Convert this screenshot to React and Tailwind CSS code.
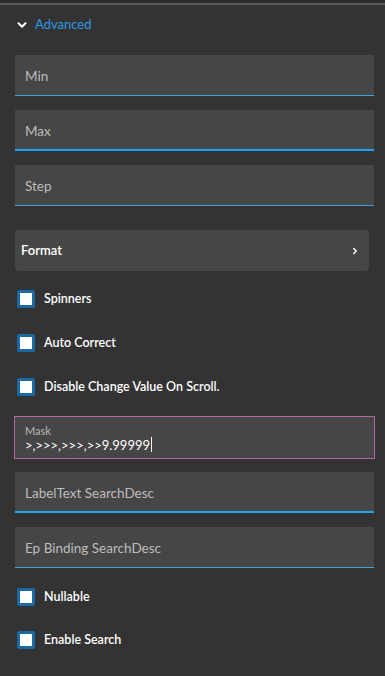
import { ChevronDown, ChevronRight } from 'lucide-react';

const font = { fontFamily: '"Source Sans Pro", Lato, "Noto Sans", sans-serif' };

function Field({ label, focused = false, className = '' }) {
  return (
    <div className={`h-[41px] bg-[#464646] flex flex-col ${className}`}>
      <div className="flex-1 flex items-center pl-[10px] pt-[3px]">
        <span className="text-[13.5px] text-[#bdbdbd]">{label}</span>
      </div>
      <div className={focused ? 'h-[2px] bg-[#1fa3f2]' : 'h-[1px] bg-[#3fa2de]'} />
    </div>
  );
}

function Check({ label, className = '' }) {
  return (
    <label className={`flex items-center h-[18px] pl-[2px] ${className}`}>
      <span className="w-[18px] h-[18px] bg-white border-[3px] border-[#1b6aa3] rounded-[2px] shrink-0" />
      <span className="ml-[9px] text-[12.5px] font-semibold text-white">{label}</span>
    </label>
  );
}

export default function App() {
  return (
    <div className="w-[385px] h-[676px] bg-[#333333] overflow-hidden" style={font}>
      <div className="h-[3px] bg-[#2c2c2c]" />
      <div className="h-[2px] bg-[#5c5c5c]" />
      <div className="flex items-center h-[38px] pl-[15px] pt-[2px]">
        <ChevronDown size={14} strokeWidth={3.5} className="text-white" />
        <span className="ml-[6px] text-[13px] text-[#2e9ae0]">Advanced</span>
      </div>
      <div className="flex flex-col pl-[15px] pr-[11px] pt-[12px]">
        <Field label="Min" />
        <Field label="Max" focused className="mt-[14px]" />
        <Field label="Step" className="mt-[14px]" />
        <div className="mt-[24px] h-[41px] mr-[5px] bg-[#464646] rounded-[4px] flex items-center justify-between pl-[6px] pr-[9px]">
          <span className="text-[13px] font-semibold text-white">Format</span>
          <ChevronRight size={10} strokeWidth={3.5} className="text-white" />
        </div>
        <Check label="Spinners" className="mt-[19px]" />
        <Check label="Auto Correct" className="mt-[26px]" />
        <Check label="Disable Change Value On Scroll." className="mt-[26px]" />
        <div className="mt-[20px] -ml-px -mr-px h-[43px] bg-[#464646] border border-[#b4689c] flex flex-col justify-center pl-[10px] pt-px">
          <span className="text-[11px] leading-[13px] text-[#b8b8b8]">Mask</span>
          <span className="flex items-center text-[13px] leading-[16px] text-white">
            &gt;,&gt;&gt;&gt;,&gt;&gt;&gt;,&gt;&gt;9.99999
            <span className="w-px h-[15px] bg-white ml-px" />
          </span>
        </div>
        <Field label="LabelText SearchDesc" focused className="mt-[13px]" />
        <Field label="Ep Binding SearchDesc" className="mt-[14px]" />
        <Check label="Nullable" className="mt-[20px]" />
        <Check label="Enable Search" className="mt-[25px]" />
      </div>
    </div>
  );
}
